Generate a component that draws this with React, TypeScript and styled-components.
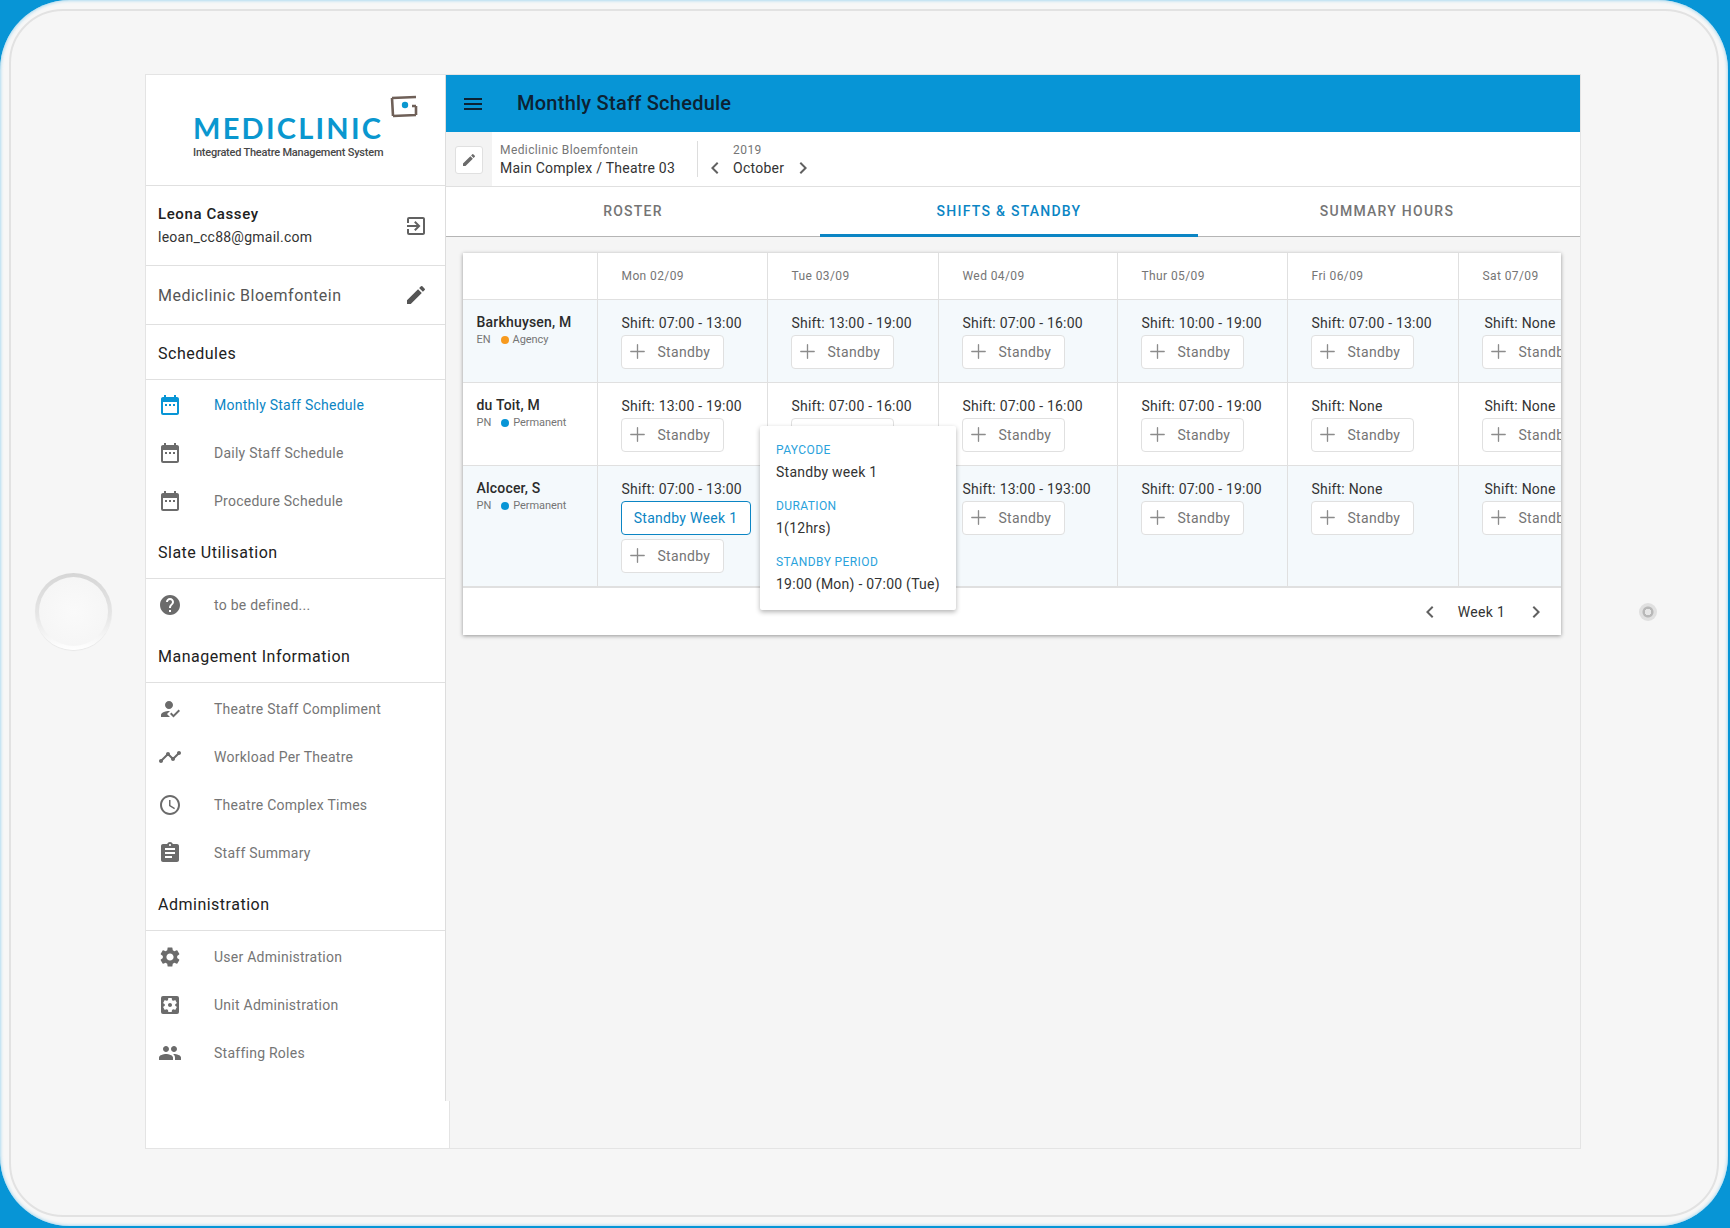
import styled, { createGlobalStyle } from 'styled-components';
import {
  MdAccessTime,
  MdAssignment,
  MdChevronLeft,
  MdChevronRight,
  MdDateRange,
  MdEdit,
  MdExitToApp,
  MdHelp,
  MdHowToReg,
  MdMenu,
  MdPeople,
  MdSettings,
  MdSettingsApplications,
  MdTimeline,
} from 'react-icons/md';
import { Plus } from 'lucide-react';
import type { IconType } from 'react-icons';

const BLUE = '#0795d6';
const LINK = '#0b85c4';

const GlobalStyle = createGlobalStyle`
  html, body {
    margin: 0;
    padding: 0;
    background: ${BLUE};
  }
  body {
    font-family: Roboto, "Liberation Sans", sans-serif;
    color: rgba(0, 0, 0, 0.87);
  }
  * { box-sizing: border-box; }
`;

const Page = styled.div`
  width: 1730px;
  height: 1228px;
  overflow: hidden;
  background: ${BLUE};
`;

const Tablet = styled.div`
  width: 1728px;
  height: 1226px;
  padding: 9px;
  border-radius: 70px;
  background: #f7f7f7;
  box-shadow: inset 0 0 3px 1px rgba(150, 210, 238, 0.75);
`;

const Bezel = styled.div`
  height: 100%;
  border: 2px solid #e2e2e2;
  border-radius: 54px;
  background: #f6f6f6;
  padding-top: 64px;
  display: grid;
  grid-template-columns: 135px 1434px 1fr;
  grid-template-rows: 1073px;
  align-items: center;
`;

const HomeButton = styled.div`
  width: 77px;
  height: 77px;
  margin-left: 24px;
  padding: 4px;
  border-radius: 50%;
  background: linear-gradient(#d6d6d6, #e6e6e6 55%, #fff);
  box-shadow: 0 1px 1px rgba(0, 0, 0, 0.06);
`;

const HomeFace = styled.div`
  height: 100%;
  border-radius: 50%;
  background: radial-gradient(circle, #fafafa, #f4f4f4);
`;

const Camera = styled.div`
  width: 18px;
  height: 18px;
  margin-left: 59px;
  border-radius: 50%;
  background: radial-gradient(circle, #e6e6e6 0 3px, #b8b8b8 3.5px 5px, #e0e0e0 6px);
`;

const Screen = styled.div`
  height: 100%;
  display: flex;
  background: #f5f5f5;
  box-shadow: 0 0 0 1px #e4e4e4;
`;

const Sidebar = styled.aside`
  width: 300px;
  flex: none;
  display: flex;
  flex-direction: column;
`;

const SidebarBody = styled.div`
  height: 1026px;
  background: #fff;
  border-right: 1px solid #ddd;
`;

const SidebarTail = styled.div`
  position: relative;
  z-index: 1;
  width: 304px;
  flex: 1;
  background: #fff;
  border-right: 1px solid #e4e4e4;
`;

const LogoBlock = styled.div`
  height: 111px;
  border-bottom: 1px solid #e0e0e0;
  padding: 36px 0 0 47px;
  position: relative;
`;

const LogoMark = styled.svg`
  position: absolute;
  left: 244px;
  top: 20px;
`;

const LogoName = styled.div`
  font-family: Lato, Roboto, sans-serif;
  font-weight: 700;
  font-size: 29px;
  line-height: 34px;
  letter-spacing: 2.25px;
  color: #0a97cf;
`;

const LogoTag = styled.div`
  margin-top: 1px;
  font-size: 11px;
  line-height: 14px;
  font-weight: 500;
  color: #484848;
  letter-spacing: -0.22px;
`;

const ProfileRow = styled.div`
  height: 80px;
  border-bottom: 1px solid #e0e0e0;
  padding: 0 17px 0 12px;
  display: flex;
  align-items: center;
  justify-content: space-between;
  color: #616161;
`;

const ProfileText = styled.div`
  padding-bottom: 2px;
`;

const ProfileName = styled.div`
  font-size: 15px;
  line-height: 24px;
  font-weight: 500;
  letter-spacing: 0.6px;
  color: #212121;
`;

const ProfileMail = styled.div`
  font-size: 14px;
  line-height: 22px;
  letter-spacing: 0.25px;
  color: #333;
`;

const OrgRow = styled(ProfileRow)`
  height: 59px;
  font-size: 16px;
  letter-spacing: 0.5px;
  color: #555;
`;

const SectionTitle = styled.div<{ $height: number }>`
  height: ${(p) => p.$height}px;
  border-bottom: 1px solid #e0e0e0;
  padding: ${(p) => p.$height - 38}px 12px 0;
  font-size: 16px;
  line-height: 24px;
  letter-spacing: 0.5px;
  color: #212121;
`;

const NavList = styled.div<{ $top: number }>`
  padding-top: ${(p) => p.$top}px;
`;

const NavItem = styled.div<{ $active?: boolean }>`
  height: 48px;
  padding-left: 12px;
  display: flex;
  align-items: center;
  gap: 32px;
  font-size: 14px;
  letter-spacing: 0.25px;
  color: ${(p) => (p.$active ? LINK : '#757575')};

  svg {
    flex: none;
    color: ${(p) => (p.$active ? BLUE : '#6b6b6b')};
  }
`;

const Main = styled.main`
  flex: 1;
  min-width: 0;
  display: flex;
  flex-direction: column;
`;

const AppBar = styled.header`
  height: 57px;
  flex: none;
  background: ${BLUE};
  display: flex;
  align-items: center;
  padding-left: 15px;
  gap: 32px;
  color: #0c2233;
`;

const AppTitle = styled.h1`
  margin: 0 0 1px;
  font-size: 20px;
  font-weight: 500;
  letter-spacing: 0.25px;
`;

const Toolbar = styled.div`
  height: 55px;
  flex: none;
  display: flex;
  background: #fff;
  border-bottom: 1px solid #e0e0e0;
`;

const EditBlock = styled.div`
  width: 46px;
  background: #f3f3f3;
  display: flex;
  align-items: center;
  justify-content: center;
`;

const EditButton = styled.div`
  width: 28px;
  height: 28px;
  margin-top: 1px;
  background: #fff;
  border: 1px solid #e0e0e0;
  border-radius: 3px;
  display: flex;
  align-items: center;
  justify-content: center;
  color: #6b6b6b;
`;

const Crumb = styled.div`
  padding: 9px 22px 0 8px;
`;

const CrumbSmall = styled.div`
  font-size: 12px;
  line-height: 18px;
  letter-spacing: 0.4px;
  color: #757575;
`;

const CrumbMain = styled.div`
  margin-top: -1px;
  font-size: 14px;
  line-height: 20px;
  letter-spacing: 0.25px;
  color: #333;
`;

const MonthBlock = styled.div`
  height: 36px;
  margin-top: 9px;
  border-left: 1px solid #ddd;
  padding-left: 5px;
  display: flex;
  align-items: flex-end;
  color: #616161;

  svg {
    margin-bottom: -3px;
  }
`;

const MonthText = styled.div`
  width: 64px;
  padding-left: 6px;
  align-self: flex-start;
`;

const Tabs = styled.nav`
  height: 50px;
  flex: none;
  display: grid;
  grid-template-columns: 374px 378px 378px;
  background: #fff;
  border-bottom: 1px solid #b5b5b5;
`;

const Tab = styled.div<{ $active?: boolean }>`
  height: 50px;
  display: flex;
  align-items: center;
  justify-content: center;
  font-size: 14px;
  font-weight: 500;
  letter-spacing: 1.25px;
  color: ${(p) => (p.$active ? LINK : '#757575')};
  border-bottom: 3px solid ${(p) => (p.$active ? LINK : 'transparent')};
`;

const Content = styled.div`
  flex: 1;
  padding: 16px 19px 0 17px;
`;

const Card = styled.section`
  position: relative;
  height: 382px;
  background: #fff;
  box-shadow: 0 1px 4px rgba(0, 0, 0, 0.4);
`;

const TableClip = styled.div`
  overflow: hidden;
`;

const TableRow = styled.div<{ $shaded?: boolean }>`
  width: 1300px;
  display: grid;
  grid-template-columns: 135px 170px 171px 179px 170px 171px 1fr;
  background: ${(p) => (p.$shaded ? '#f4f9fc' : '#fff')};
  border-bottom: 1px solid #e0e0e0;
`;

const HeadCell = styled.div`
  height: 46px;
  border-right: 1px solid #e0e0e0;
  padding-left: 23.5px;
  display: flex;
  align-items: center;
  font-size: 12px;
  letter-spacing: 0.4px;
  color: #757575;
`;

const StaffCell = styled.div`
  border-right: 1px solid #e0e0e0;
  padding: 12px 0 0 13.5px;
`;

const StaffName = styled.div`
  font-size: 14px;
  line-height: 20px;
  font-weight: 500;
  letter-spacing: 0.2px;
  color: #2b2b2b;
`;

const StaffMeta = styled.div`
  margin-top: 1px;
  display: flex;
  align-items: center;
  font-size: 11px;
  line-height: 14px;
  letter-spacing: -0.05px;
  color: #757575;
`;

const Dot = styled.span<{ $color: string }>`
  width: 8px;
  height: 8px;
  margin: 0 4px 0 10px;
  border-radius: 50%;
  background: ${(p) => p.$color};
`;

const ShiftCell = styled.div`
  border-right: 1px solid #e0e0e0;
  padding: 12.5px 0 13.5px 22.5px;
  display: flex;
  flex-direction: column;
  align-items: flex-start;
  gap: 4px;
`;

const ShiftLabel = styled.div<{ $inset: number }>`
  margin-bottom: -2px;
  padding-left: ${(p) => p.$inset}px;
  font-size: 14px;
  line-height: 20px;
  letter-spacing: 0.2px;
  white-space: nowrap;
  color: #333;
`;

const StandbyButton = styled.div`
  width: 103px;
  height: 34px;
  flex: none;
  background: #fff;
  border: 1px solid #e0e0e0;
  border-radius: 4px;
  padding-left: 4px;
  display: flex;
  align-items: center;
  gap: 9px;
  font-size: 14px;
  letter-spacing: 0.3px;
  color: #757575;

  svg {
    color: #8c8c8c;
  }
`;

const BookedButton = styled.div`
  width: 130px;
  height: 34px;
  flex: none;
  background: #fff;
  border: 1px solid ${LINK};
  border-radius: 4px;
  display: flex;
  align-items: center;
  justify-content: center;
  font-size: 14px;
  letter-spacing: 0.3px;
  color: ${LINK};
`;

const Pager = styled.footer`
  height: 48px;
  border-top: 1px solid #e0e0e0;
  padding-right: 13px;
  display: flex;
  align-items: center;
  justify-content: flex-end;
  color: #616161;
`;

const PagerLabel = styled.span`
  width: 82px;
  padding-right: 3px;
  text-align: center;
  font-size: 14px;
  letter-spacing: 0.35px;
  color: #333;
`;

const Popover = styled.div`
  position: absolute;
  left: 297px;
  top: 173px;
  width: 196px;
  height: 184px;
  padding: 15px 16px;
  background: #fff;
  border-radius: 2px;
  box-shadow: 0 2px 5px rgba(0, 0, 0, 0.3);
`;

const PopLabel = styled.div`
  font-size: 12px;
  line-height: 18px;
  letter-spacing: 0.4px;
  color: #2aa2dc;
  margin-top: 15px;

  &:first-child {
    margin-top: 0;
  }
`;

const PopValue = styled.div`
  margin-top: 3px;
  font-size: 14px;
  line-height: 20px;
  letter-spacing: 0.25px;
  white-space: nowrap;
  color: #333;
`;

type NavEntry = { label: string; icon: IconType; active?: boolean };

const schedules: NavEntry[] = [
  { label: 'Monthly Staff Schedule', icon: MdDateRange, active: true },
  { label: 'Daily Staff Schedule', icon: MdDateRange },
  { label: 'Procedure Schedule', icon: MdDateRange },
];
const management: NavEntry[] = [
  { label: 'Theatre Staff Compliment', icon: MdHowToReg },
  { label: 'Workload Per Theatre', icon: MdTimeline },
  { label: 'Theatre Complex Times', icon: MdAccessTime },
  { label: 'Staff Summary', icon: MdAssignment },
];
const administration: NavEntry[] = [
  { label: 'User Administration', icon: MdSettings },
  { label: 'Unit Administration', icon: MdSettingsApplications },
  { label: 'Staffing Roles', icon: MdPeople },
];

const days = ['Mon 02/09', 'Tue 03/09', 'Wed 04/09', 'Thur 05/09', 'Fri 06/09', 'Sat 07/09'];

type StaffRow = {
  name: string;
  grade: string;
  kind: string;
  dot: string;
  shaded?: boolean;
  shifts: string[];
};

const staff: StaffRow[] = [
  {
    name: 'Barkhuysen, M',
    grade: 'EN',
    kind: 'Agency',
    dot: '#f79a1e',
    shaded: true,
    shifts: ['07:00 - 13:00', '13:00 - 19:00', '07:00 - 16:00', '10:00 - 19:00', '07:00 - 13:00', 'None'],
  },
  {
    name: 'du Toit, M',
    grade: 'PN',
    kind: 'Permanent',
    dot: '#0795d6',
    shifts: ['13:00 - 19:00', '07:00 - 16:00', '07:00 - 16:00', '07:00 - 19:00', 'None', 'None'],
  },
  {
    name: 'Alcocer, S',
    grade: 'PN',
    kind: 'Permanent',
    dot: '#0795d6',
    shaded: true,
    shifts: ['07:00 - 13:00', '', '13:00 - 193:00', '07:00 - 19:00', 'None', 'None'],
  },
];

const Standby = () => (
  <StandbyButton>
    <Plus size={23} strokeWidth={1.4} />
    Standby
  </StandbyButton>
);

const NavGroup = ({ items, top }: { items: NavEntry[]; top: number }) => (
  <NavList $top={top}>
    {items.map((item) => (
      <NavItem key={item.label} $active={item.active}>
        <item.icon size={24} />
        {item.label}
      </NavItem>
    ))}
  </NavList>
);

const App = () => {
  return (
    <Page>
      <GlobalStyle />
      <Tablet>
        <Bezel>
          <HomeButton>
            <HomeFace />
          </HomeButton>
          <Screen>
            <Sidebar>
              <SidebarBody>
                <LogoBlock>
                  <LogoName>MEDICLINIC</LogoName>
                  <LogoTag>Integrated Theatre Management System</LogoTag>
                  <LogoMark width="28" height="24" viewBox="0 0 28 24">
                    <path
                      d="M2 3 L26 2 M2 3 L3 21 M3 21 L26 20 M26 20 L26 11 M22 11 L26 11"
                      fill="none"
                      stroke="#6f6058"
                      strokeWidth="2.6"
                    />
                    <circle cx="15" cy="10" r="3.2" fill="#0a97cf" />
                  </LogoMark>
                </LogoBlock>
                <ProfileRow>
                  <ProfileText>
                    <ProfileName>Leona Cassey</ProfileName>
                    <ProfileMail>leoan_cc88@gmail.com</ProfileMail>
                  </ProfileText>
                  <MdExitToApp size={24} />
                </ProfileRow>
                <OrgRow>
                  Mediclinic Bloemfontein
                  <MdEdit size={24} />
                </OrgRow>
                <SectionTitle $height={55}>Schedules</SectionTitle>
                <NavGroup items={schedules} top={1} />
                <SectionTitle $height={54}>Slate Utilisation</SectionTitle>
                <NavGroup items={[{ label: 'to be defined...', icon: MdHelp }]} top={2} />
                <SectionTitle $height={54}>Management Information</SectionTitle>
                <NavGroup items={management} top={2} />
                <SectionTitle $height={54}>Administration</SectionTitle>
                <NavGroup items={administration} top={2} />
              </SidebarBody>
              <SidebarTail />
            </Sidebar>
            <Main>
              <AppBar>
                <MdMenu size={24} />
                <AppTitle>Monthly Staff Schedule</AppTitle>
              </AppBar>
              <Toolbar>
                <EditBlock>
                  <EditButton>
                    <MdEdit size={16} />
                  </EditButton>
                </EditBlock>
                <Crumb>
                  <CrumbSmall>Mediclinic Bloemfontein</CrumbSmall>
                  <CrumbMain>Main Complex / Theatre 03</CrumbMain>
                </Crumb>
                <MonthBlock>
                  <MdChevronLeft size={24} />
                  <MonthText>
                    <CrumbSmall>2019</CrumbSmall>
                    <CrumbMain>October</CrumbMain>
                  </MonthText>
                  <MdChevronRight size={24} />
                </MonthBlock>
              </Toolbar>
              <Tabs>
                <Tab>ROSTER</Tab>
                <Tab $active>SHIFTS &amp; STANDBY</Tab>
                <Tab>SUMMARY HOURS</Tab>
              </Tabs>
              <Content>
                <Card>
                  <TableClip>
                    <TableRow>
                      <HeadCell />
                      {days.map((day) => (
                        <HeadCell key={day}>{day}</HeadCell>
                      ))}
                    </TableRow>
                    {staff.map((row) => (
                      <TableRow key={row.name} $shaded={row.shaded}>
                        <StaffCell>
                          <StaffName>{row.name}</StaffName>
                          <StaffMeta>
                            {row.grade}
                            <Dot $color={row.dot} />
                            {row.kind}
                          </StaffMeta>
                        </StaffCell>
                        {row.shifts.map((shift, index) => (
                          <ShiftCell key={index}>
                            {row.name === 'Alcocer, S' && index === 1 ? null : (
                              <ShiftLabel $inset={index === 5 ? 3 : 1}>Shift: {shift}</ShiftLabel>
                            )}
                            {row.name === 'Alcocer, S' && index === 0 && (
                              <BookedButton>Standby Week 1</BookedButton>
                            )}
                            {!(row.name === 'Alcocer, S' && index === 1) && <Standby />}
                          </ShiftCell>
                        ))}
                      </TableRow>
                    ))}
                  </TableClip>
                  <Pager>
                    <MdChevronLeft size={24} />
                    <PagerLabel>Week 1</PagerLabel>
                    <MdChevronRight size={24} />
                  </Pager>
                  <Popover>
                    <PopLabel>PAYCODE</PopLabel>
                    <PopValue>Standby week 1</PopValue>
                    <PopLabel>DURATION</PopLabel>
                    <PopValue>1(12hrs)</PopValue>
                    <PopLabel>STANDBY PERIOD</PopLabel>
                    <PopValue>19:00 (Mon) - 07:00 (Tue)</PopValue>
                  </Popover>
                </Card>
              </Content>
            </Main>
          </Screen>
          <Camera />
        </Bezel>
      </Tablet>
    </Page>
  );
};

export default App;
